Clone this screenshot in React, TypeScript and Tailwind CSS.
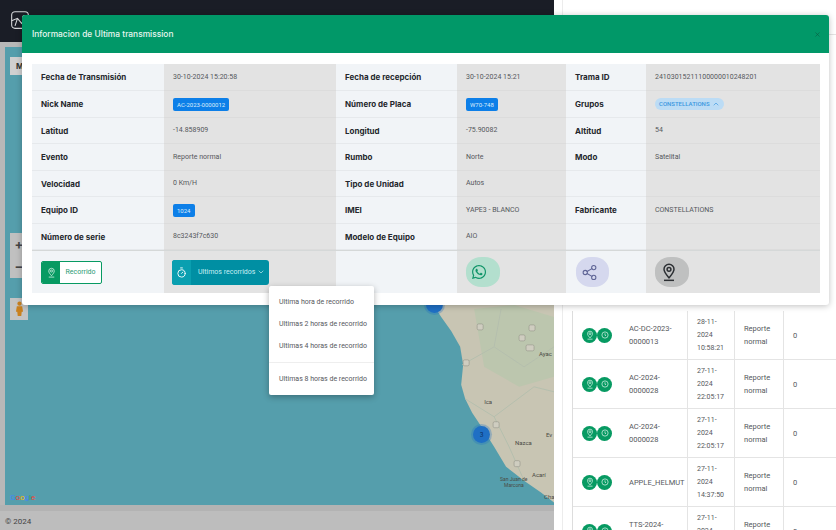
import { ChevronDown, ChevronUp, Share2, Timer, X } from "lucide-react";
import { FaWhatsapp } from "react-icons/fa";

const font = { fontFamily: "Inter, 'Noto Sans', sans-serif" };

const PinIcon = ({ className = "" }: { className?: string }) => (
  <svg viewBox="0 0 24 24" fill="none" stroke="currentColor" strokeWidth="1.8" className={className}>
    <path d="M12 19c-3-3.6-6-6.8-6-10.2a6 6 0 0 1 12 0c0 3.4-3 6.6-6 10.2z" />
    <circle cx="12" cy="8.8" r="2.3" />
    <path d="M6 22h12" />
  </svg>
);

const ClockPin = ({ className = "" }: { className?: string }) => (
  <svg viewBox="0 0 24 24" fill="none" stroke="currentColor" strokeWidth="1.8" className={className}>
    <circle cx="12" cy="12" r="7.5" />
    <path d="M12 8v4.5l2.5 1.5" />
  </svg>
);

const Chip = ({ children }: { children: React.ReactNode }) => (
  <span className="inline-block rounded-[2px] bg-[#0d7fe8] px-[4px] py-[3px] text-[6px] leading-[7px] font-normal text-[#dcecfb]">
    {children}
  </span>
);

const Label = ({ children }: { children?: React.ReactNode }) => (
  <div className="flex items-center border-b border-[#e6e9ec] bg-[#f1f4f7] pl-[9px] text-[8px] font-bold text-[#24272c]">
    {children}
  </div>
);

const Value = ({ children }: { children?: React.ReactNode }) => (
  <div className="flex items-center border-b border-[#dcdcdc] bg-[#e3e3e3] pl-[9px] font-['Roboto'] text-[7px] text-[#55585c]">
    {children}
  </div>
);

const rows: [string, React.ReactNode, string, React.ReactNode, string, React.ReactNode][] = [
  ["Fecha de Transmisión", "30-10-2024 15:20:58", "Fecha de recepción", "30-10-2024 15:21", "Trama ID", "24103015211100000010248201"],
  [
    "Nick Name",
    <Chip>AC-2023-0000012</Chip>,
    "Número de Placa",
    <Chip>W70-748</Chip>,
    "Grupos",
    <span className="flex items-center gap-[2px] rounded-full bg-[#bcdcf5] px-[4px] py-[2px] text-[6px] leading-[8px] font-medium text-[#3b97e0]">
      CONSTELLATIONS <ChevronUp className="h-2 w-2" />
    </span>,
  ],
  ["Latitud", "-14.858909", "Longitud", "-75.90082", "Altitud", "54"],
  ["Evento", "Reporte normal", "Rumbo", "Norte", "Modo", "Satelital"],
  ["Velocidad", "0 Km/H", "Tipo de Unidad", "Autos", "", ""],
  ["Equipo ID", <Chip>1024</Chip>, "IMEI", "YAPE3 - BLANCO", "Fabricante", "CONSTELLATIONS"],
  ["Número de serie", "8c3243f7c630", "Modelo de Equipo", "AIO", "", ""],
];

const units = [
  { name: ["AC-DC-2023-", "0000013"], date: ["28-11-", "2024", "10:58:21"] },
  { name: ["AC-2024-", "0000028"], date: ["27-11-", "2024", "22:05:17"] },
  { name: ["AC-2024-", "0000028"], date: ["27-11-", "2024", "22:05:17"] },
  { name: ["APPLE_HELMUT"], date: ["27-11-", "2024", "14:37:50"] },
  { name: ["TTS-2024-", "0000011"], date: ["27-11-", "2024", "14:37:50"] },
];

const Cluster = ({ n, className }: { n: string; className: string }) => (
  <div
    className={`absolute flex h-[17px] w-[17px] items-center justify-center rounded-full bg-[#1f6fc4] text-[6px] text-[#0b2c59] ring-2 ring-[#1f6fc4]/30 ${className}`}
  >
    {n}
  </div>
);

const MapLand = () => (
  <svg viewBox="0 0 550 458" className="absolute inset-0 h-full w-full">
    <path
      d="M428 256 L437 270 L447 284 L456 300 L459 318 L457 338 L461 352 L468 366 L478 381 L490 400 L502 420 L520 434 L537 446 L550 456 L550 0 L428 0 Z"
      fill="#c8c5b3"
    />
    <path d="M470 262 L510 258 L550 270 L550 330 L515 340 L480 320 Z" fill="#bcc6ae" />
    <g fill="none" stroke="#b5bfae" strokeWidth="1">
      <path d="M458 318 L490 300 L520 320 L550 300" />
      <path d="M461 352 L490 370 L505 400 L520 434" />
      <path d="M490 300 L497 262" />
      <path d="M490 370 L530 340 L550 345" />
    </g>
    <g fill="#cfcdc0" stroke="#8a8a80" strokeWidth="0.5">
      <rect x="473" y="277" width="6" height="6" rx="1.5" />
      <rect x="525" y="278" width="6" height="6" rx="1.5" />
      <rect x="515" y="288" width="6" height="6" rx="1.5" />
      <rect x="522" y="298" width="8" height="6" rx="1.5" />
      <rect x="459" y="313" width="6" height="6" rx="1.5" />
      <rect x="489" y="375" width="6" height="6" rx="1.5" />
      <rect x="510" y="414" width="6" height="6" rx="1.5" />
    </g>
    <g fill="#4a4a44" fontSize="6" fontFamily="Roboto, sans-serif">
      <text x="480" y="357">Ica</text>
      <text x="511" y="398">Nazca</text>
      <text x="535" y="309">Ayac</text>
      <text x="542" y="390">Ev</text>
      <text x="496" y="434" fontSize="5">San Juan de</text>
      <text x="500" y="440" fontSize="5">Marcona</text>
      <text x="528" y="430">Acarí</text>
      <text x="540" y="452">Cha</text>
    </g>
  </svg>
);

export default function App() {
  return (
    <div className="relative flex h-[530px] w-[836px] overflow-hidden bg-white" style={font}>
      <div className="flex w-[555px] flex-col">
        <header className="flex h-[42px] shrink-0 items-start bg-[#1a1d26] pt-[9px] pl-[10px]">
          <svg viewBox="0 0 24 24" fill="none" stroke="#d5d7da" strokeWidth="1.3" className="h-[22px] w-[20px]">
            <rect x="2" y="2" width="20" height="20" rx="4" />
            <path d="M2 13l7-3 5 6 8-9M9 10l-3 9" />
          </svg>
        </header>
        <main className="flex min-h-0 flex-1 flex-col bg-[#b8b8b8] pt-[5px] pl-[5px]">
          <div className="relative flex-1 bg-[#559eac]">
            <MapLand />
            <Cluster n="" className="top-[249px] left-[421px]" />
            <Cluster n="3" className="top-[379px] left-[468px]" />
            <div className="absolute top-[10px] left-[5px] flex h-[18px] w-[20px] items-center pl-[6px] text-[8px] font-bold text-[#333] bg-[#d0d0d0]">
              M
            </div>
            <div className="absolute top-[186px] left-[5px] flex h-[45px] w-[18px] flex-col items-center justify-around bg-[#c0c0c0] text-[13px] leading-none font-bold text-[#444]">
              <span>+</span>
              <span>−</span>
            </div>
            <div className="absolute top-[251px] left-[5px] flex h-[22px] w-[18px] items-center justify-center bg-[#c4c4c4]">
              <svg viewBox="0 0 10 18" className="h-[16px] w-[9px]" fill="#c9811f">
                <circle cx="5" cy="3" r="2.4" />
                <path d="M2 6h6l1 6H7.5L7 17H3l-.5-5H1z" />
              </svg>
            </div>
            <div className="absolute bottom-[1px] left-[5px] font-['Roboto'] text-[8px]">
              <span className="text-[#4285f4]">G</span>
              <span className="text-[#ea4335]">o</span>
              <span className="text-[#fbbc05]">o</span>
              <span className="text-[#4285f4]">g</span>
              <span className="text-[#34a853]">l</span>
              <span className="text-[#ea4335]">e</span>
            </div>
          </div>
          <footer className="h-[25px] shrink-0 -ml-[5px] border-t-[6px] border-[#b3b3b3] bg-[#bdbdbd] pt-[5px] pl-[5px] font-['Roboto'] text-[8px] text-[#444]">
            © 2024
          </footer>
        </main>
      </div>

      <aside className="flex-1 pl-[8px]">
        <div className="h-full border-l border-[#ececec] pl-[9px]">
          <div className="h-[35px] border-b border-[#e4e4e4]" />
          <div className="h-[276px]" />
          <div className="border-l border-[#dddddd]">
            {units.map((u, i) => (
              <div
                key={i}
                className="grid h-[49px] grid-cols-[115px_47px_49px_52px] items-center border-b border-[#e4e4e4] font-['Roboto'] text-[7.5px] leading-[13px] text-[#55585c]"
              >
                <div className="flex h-full items-center border-r border-[#e4e4e4]">
                  <div className="flex w-[56px] shrink-0 pl-[9px]">
                    <span className="flex h-[15px] w-[15px] items-center justify-center rounded-full bg-[#079a62] text-[#d6f0e5]">
                      <PinIcon className="h-[10px] w-[10px]" />
                    </span>
                    <span className="flex h-[15px] w-[15px] items-center justify-center rounded-full bg-[#079a62] text-[#d6f0e5]">
                      <ClockPin className="h-[10px] w-[10px]" />
                    </span>
                  </div>
                  <div>
                    {u.name.map((t) => (
                      <div key={t}>{t}</div>
                    ))}
                  </div>
                </div>
                <div className="flex h-full flex-col justify-center border-r border-[#e4e4e4] pl-[9px] text-[7px]">
                  {u.date.map((t) => (
                    <div key={t}>{t}</div>
                  ))}
                </div>
                <div className="flex h-full flex-col justify-center border-r border-[#e4e4e4] pl-[9px]">
                  <div>Reporte</div>
                  <div>normal</div>
                </div>
                <div className="pl-[9px]">0</div>
              </div>
            ))}
          </div>
        </div>
      </aside>

      {/* modal */}
      <div className="absolute top-[15px] left-[22px] h-[290px] w-[807px] rounded-[3px] bg-white shadow-[0_1px_6px_rgba(0,0,0,0.25)]">
        <div className="flex h-[38px] items-center justify-between rounded-t-[3px] bg-[#019868] pr-[8px] pl-[10px]">
          <h2 className="text-[8.4px] font-medium text-[#e8f6f0]">Informacion de Ultima transmission</h2>
          <X className="h-[7px] w-[7px] text-[#0b5c42]" />
        </div>
        <div className="mx-[10px] mt-[11px] grid h-[229px] w-[788px] grid-cols-[132px_172px_121px_109px_80px_174px] grid-rows-[27px_27px_26px_27px_26px_27px_26px_43px]">
          {rows.map((r, i) => (
            <div key={i} className="contents">
              <Label>{r[0]}</Label>
              <Value>{r[1]}</Value>
              <Label>{r[2]}</Label>
              <Value>{r[3]}</Value>
              <Label>{r[4]}</Label>
              <Value>{r[5]}</Value>
            </div>
          ))}
          <div className="flex items-center border-t border-[#d5d8d8] bg-[#f1f4f7] pl-[9px]">
            <button className="flex h-[23px] w-[61px] overflow-hidden rounded-[2px] border border-[#079a62] bg-white font-['Roboto'] text-[7px] text-[#2c9a74]">
              <span className="flex w-[18px] items-center justify-center bg-[#079a62] text-[#cfeee1]">
                <PinIcon className="h-[11px] w-[11px]" />
              </span>
              <span className="flex flex-1 items-center justify-center">Recorrido</span>
            </button>
          </div>
          <div className="flex items-center border-t border-[#d5d8d8] bg-[#e3e3e3] pl-[8px]">
            <button className="flex h-[25px] w-[97px] items-center overflow-hidden rounded-[3px] bg-[#008fa3] font-['Roboto'] text-[7px] text-[#c9eef3]">
              <span className="flex h-full w-[19px] items-center justify-center bg-[#0a9fb0] text-white">
                <Timer className="h-[11px] w-[11px]" />
              </span>
              <span className="flex flex-1 items-center gap-[2px] pl-[7px]">
                Ultimos recorridos <ChevronDown className="h-2 w-2" />
              </span>
            </button>
          </div>
          <div className="border-t border-[#d5d8d8] bg-[#f1f4f7]" />
          <div className="flex items-center border-t border-[#d5d8d8] bg-[#e3e3e3] pl-[9px]">
            <div className="flex h-[30px] w-[34px] items-center justify-center rounded-[45%] bg-[#b3dfce] pr-[9px] text-[#0f9468]">
              <FaWhatsapp className="h-[16px] w-[16px]" />
            </div>
          </div>
          <div className="flex items-center border-t border-[#d5d8d8] bg-[#f1f4f7] pl-[10px]">
            <div className="flex h-[30px] w-[33px] items-center justify-center rounded-[45%] bg-[#d5d8ee] pr-[6px] text-[#5f6596]">
              <Share2 className="h-[17px] w-[17px]" strokeWidth={1.5} />
            </div>
          </div>
          <div className="flex items-center border-t border-[#d5d8d8] bg-[#e3e3e3] pl-[9px]">
            <div className="flex h-[30px] w-[34px] items-center justify-center rounded-[45%] bg-[#bfc0c0] pr-[6px] text-[#2c2f33]">
              <PinIcon className="h-[20px] w-[20px]" />
            </div>
          </div>
        </div>

        {/* dropdown */}
        <div className="absolute top-[271px] left-[247px] z-10 h-[109px] w-[105px] rounded-[2px] bg-white pt-[5px] font-['Roboto'] text-[7px] whitespace-nowrap text-[#55585c] shadow-[0_2px_6px_rgba(0,0,0,0.3)]">
          <div className="flex h-[22px] items-center pl-[10px]">Ultima hora de recorrido</div>
          <div className="flex h-[22px] items-center pl-[10px]">Ultimas 2 horas de recorrido</div>
          <div className="flex h-[22px] items-center pl-[10px]">Ultimas 4 horas de recorrido</div>
          <div className="my-[5px] h-px bg-[#eeeeee]" />
          <div className="flex h-[22px] items-center pl-[10px]">Ultimas 8 horas de recorrido</div>
        </div>
      </div>
    </div>
  );
}
